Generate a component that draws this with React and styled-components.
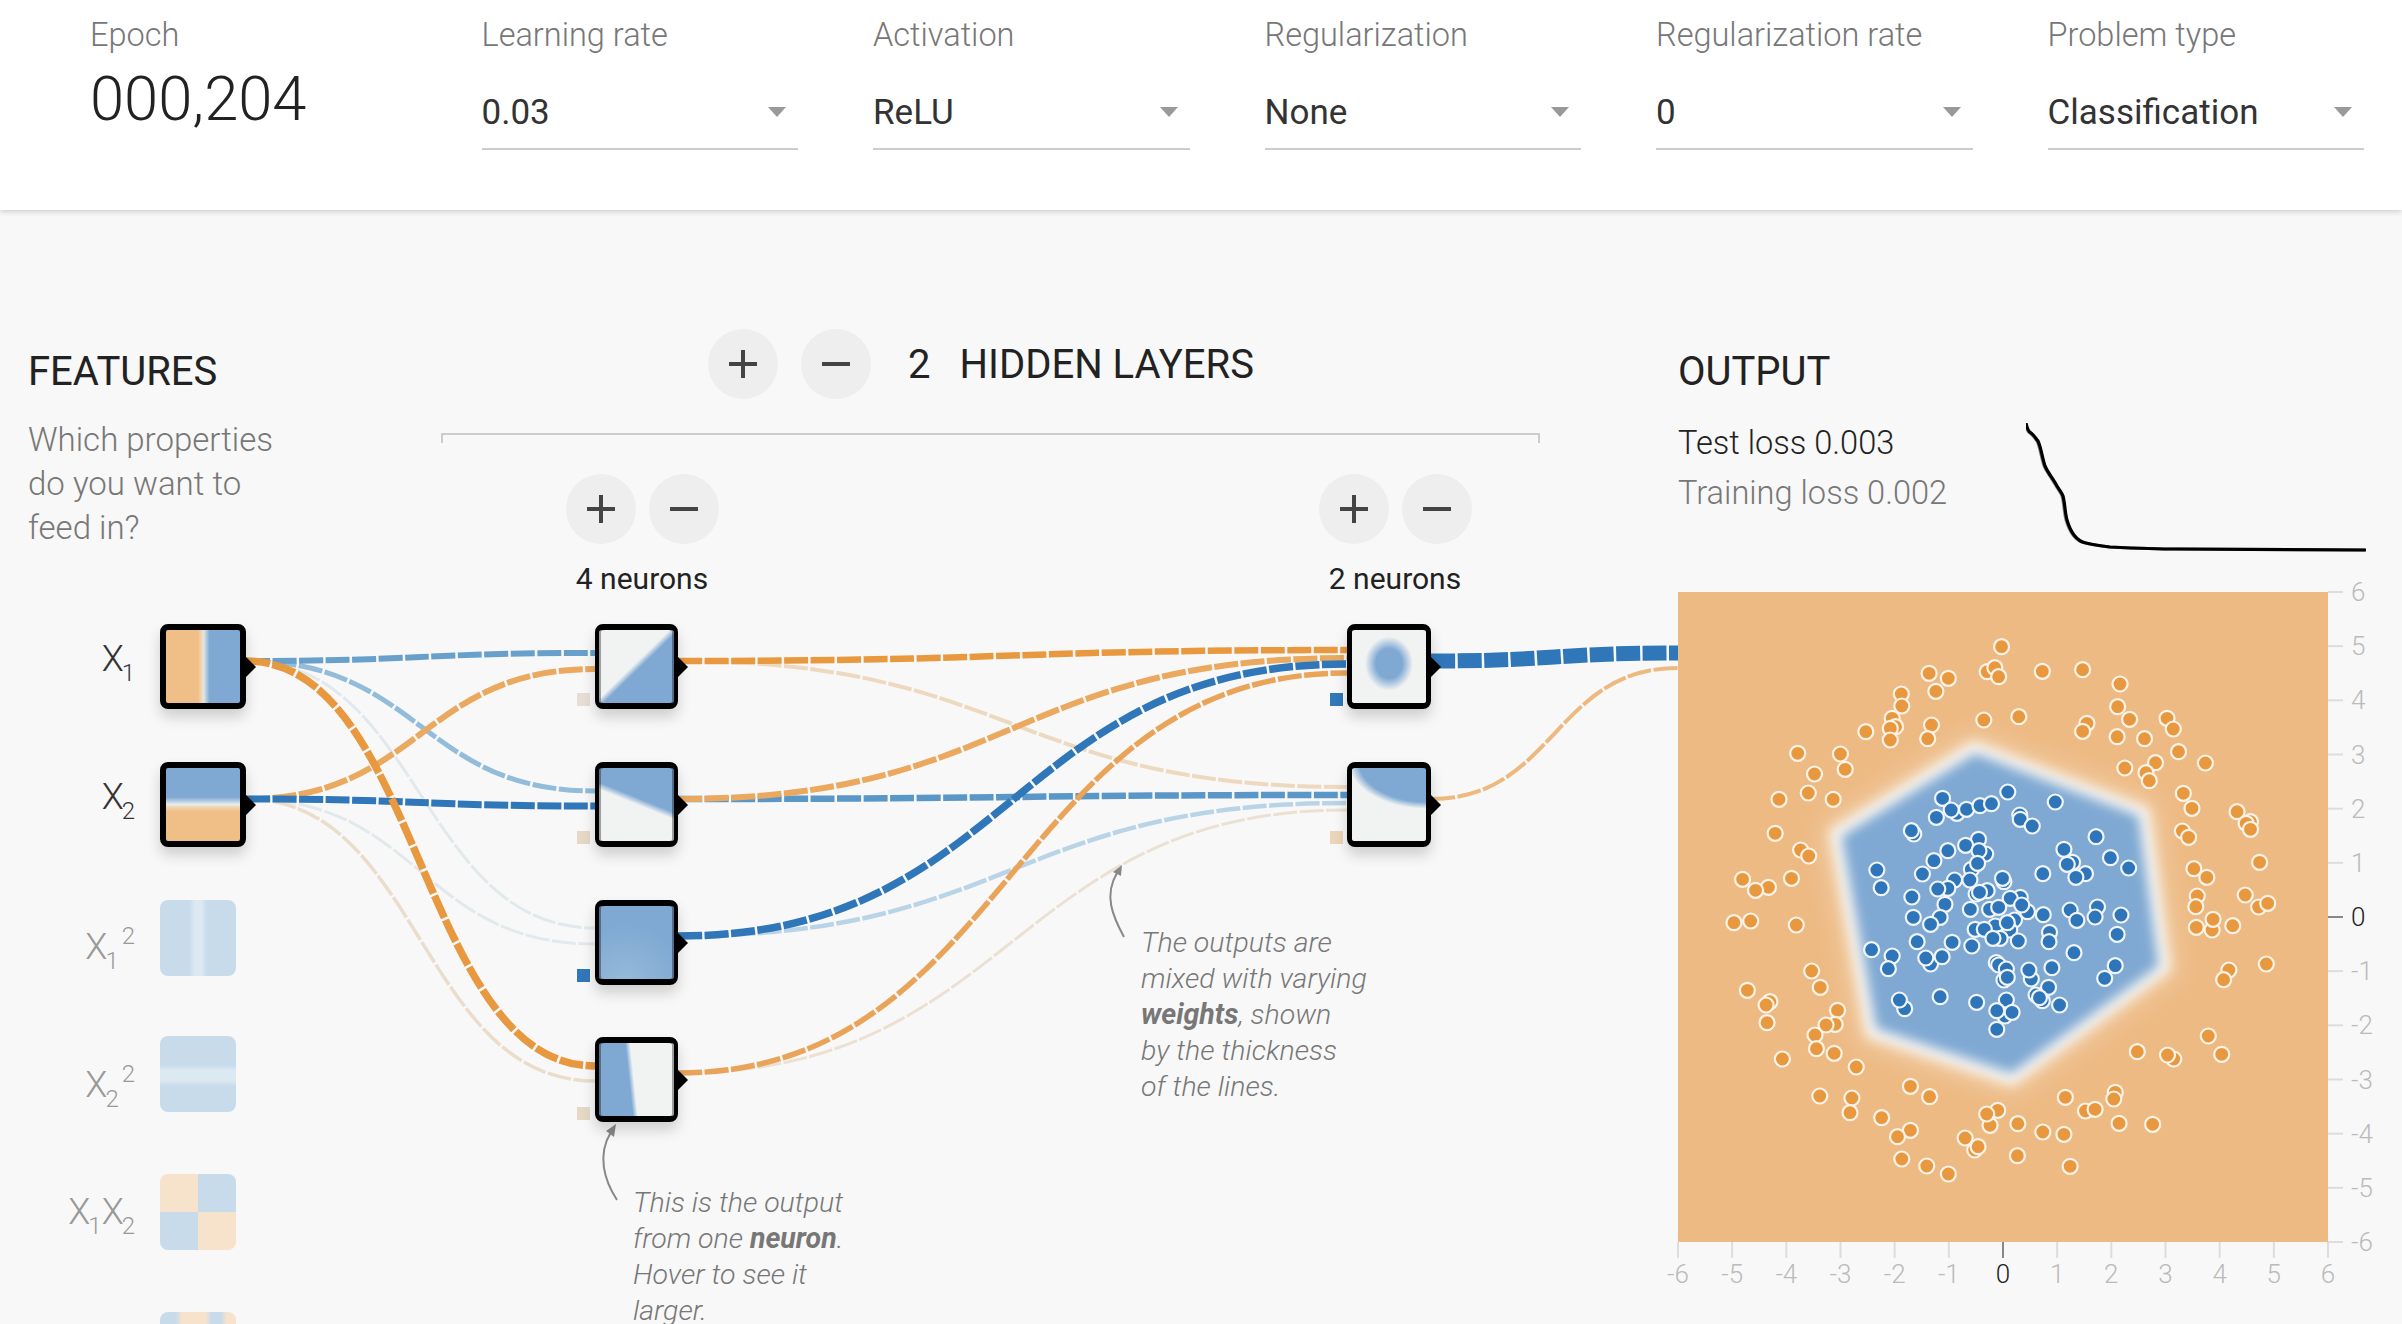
import React from 'react'
import styled, { createGlobalStyle } from 'styled-components'
import { MdAdd, MdRemove } from 'react-icons/md'

const GlobalStyle = createGlobalStyle`
  html, body {
    margin: 0;
    height: 100%;
    overflow: hidden;
    background: #f8f8f8;
    font-family: Roboto, "Liberation Sans", sans-serif;
    font-weight: 300;
  }
`

const BLUE = '#7fa9d3'
const ORANGE = '#f0be87'
const PALE = '#f1f3f3'

const selects = [
  ['Learning rate', '0.03'],
  ['Activation', 'ReLU'],
  ['Regularization', 'None'],
  ['Regularization rate', '0'],
  ['Problem type', 'Classification'],
]

// x, y, thumbnail of the nodes that take part in the network
const activeNodes = [
  { x: 160, y: 624, w: 86, side: 6, bg: `linear-gradient(to right, ${ORANGE} 43%, #f2d6b0 48%, #dfe6e8 51%, ${BLUE} 59%)` },
  { x: 160, y: 762, w: 86, side: 6, bg: `linear-gradient(to bottom, ${BLUE} 40%, #e6ecee 50%, #f2d3ac 54%, ${ORANGE} 60%)` },
  { x: 595, y: 624, w: 83, side: 4, strip: true, bg: `linear-gradient(to bottom right, ${PALE} 47%, ${BLUE} 53%)` },
  { x: 595, y: 762, w: 83, side: 4, strip: true, bg: `linear-gradient(202deg, ${BLUE} 43%, ${PALE} 50%)` },
  { x: 595, y: 900, w: 83, side: 4, strip: true, bg: `radial-gradient(circle at 35% 105%, #96bbd9, ${BLUE} 65%)` },
  { x: 595, y: 1037, w: 83, side: 4, strip: true, bg: `linear-gradient(84deg, ${BLUE} 41%, ${PALE} 47%)` },
  { x: 1347, y: 624, w: 84, side: 5, bg: `radial-gradient(ellipse 24px 27px at 50% 46%, ${BLUE} 55%, ${PALE} 100%)` },
  { x: 1347, y: 762, w: 84, side: 5, bg: `radial-gradient(ellipse 78px 48px at 100% -10%, ${BLUE} 86%, ${PALE} 100%)` },
]

const LT = '#c8dbeb'
const LW = '#dde9f2'
const LO = '#f7e3cc'

const dimNodes = [
  { y: 900, bg: `linear-gradient(to right, ${LT} 38%, ${LW} 46%, ${LW} 54%, ${LT} 62%)` },
  { y: 1036, bg: `linear-gradient(to bottom, ${LT} 38%, ${LW} 46%, ${LW} 58%, ${LT} 66%)` },
  { y: 1174, bg: `conic-gradient(${LT} 0 25%, ${LO} 25% 50%, ${LT} 50% 75%, ${LO} 75%)` },
  { y: 1312, bg: `linear-gradient(to right, ${LT} 20%, ${LO} 30% 60%, ${LT} 68% 80%, ${LO} 88%)` },
]

const biases = [
  { x: 577, y: 693, c: '#e6ded4' },
  { x: 577, y: 831, c: '#e6d8c6' },
  { x: 577, y: 969, c: '#3177b9' },
  { x: 577, y: 1107, c: '#e6d8c6' },
  { x: 1330, y: 693, c: '#3177b9' },
  { x: 1330, y: 831, c: '#ebd5ba' },
]

// [source x, source y, target x, target y, colour, width]
const links = [
  [246, 661, 595, 928, '#e2e9ec', 3],
  [246, 799, 595, 944, '#e2e9ec', 3],
  [246, 799, 595, 1081, '#eaddcb', 3.5],
  [246, 661, 595, 791, '#93bcda', 5],
  [246, 661, 595, 653, '#68a0cb', 6],
  [246, 799, 595, 669, '#eaa95f', 6],
  [246, 799, 595, 806, '#3077b9', 7],
  [246, 661, 595, 1066, '#e8983f', 7.5],
  [678, 1073, 1347, 810, '#ebe1d2', 3],
  [678, 661, 1347, 787, '#edd9bf', 4],
  [678, 936, 1347, 803, '#b9d4e6', 4.5],
  [678, 799, 1347, 795, '#5a97c7', 6.5],
  [678, 661, 1347, 650, '#e8993f', 6.5],
  [678, 799, 1347, 658, '#eaa95f', 6],
  [678, 936, 1347, 664, '#3077b9', 7.5],
  [678, 1073, 1347, 673, '#eaa45a', 5.5],
  [1431, 799, 1678, 668, '#edb97f', 4],
  [1431, 661, 1678, 653, '#3077b9', 15],
]

const linkPath = ([x1, y1, x2, y2]) => {
  const m = (x1 + x2) / 2
  return `M${x1} ${y1}C${m} ${y1},${m} ${y2},${x2} ${y2}`
}

const orangeDots = [
  [733,-520],[582,-440],[622,-425],[703,-445],[719,-457],[727,-430],[818,-446],[902,-451],[980,-408],[524,-378],[525,-342],[596,-386],[975,-340],[505,-305],[512,-280],[501,-275],[501,-240],[450,-265],[587,-285],[579,-244],[696,-300],[769,-310],[911,-290],[902,-266],[1000,-302],[974,-250],[1031,-244],[1078,-305],[1091,-273],[1102,-205],[1158,-171],[1054,-172],[1034,-142],[1041,-118],[990,-156],[1112,-80],[1130,-35],[308,-200],[397,-198],[407,-152],[343,-138],[330,-81],[382,-62],[269,-62],[1224,-25],[1252,5],[1243,10],[1252,28],
  [261,40],[1110,33],[1123,52],[314,90],[331,108],[193,178],[295,175],[247,202],[220,211],[1134,146],[1161,172],[1271,127],[1141,228],[1138,260],[1241,225],[1269,261],[1288,250],[175,308],[210,303],[305,315],[1139,322],[1172,330],[1174,298],[1215,317],[1285,432],[1207,450],[1196,479],[337,453],[355,502],[203,511],[250,545],[242,555],[244,608],[391,571],[386,613],[367,615],[344,645],[347,686],[384,700],[276,717],[430,741],[1164,648],[1192,703],[1016,695],[1092,717],[1079,705],[354,828],[421,834],[417,878],[543,799],[583,830],[483,893],[543,931],[516,950],[525,1017],[577,1038],[622,1062],[657,954],[677,990],[684,980],[725,871],[709,916],[702,882],[767,911],[819,936],[863,943],[866,832],[908,873],[928,868],[970,817],[967,837],[978,910],[1048,913],[766,1007],[876,1039],
]

const blueDots = [
  [640,-20],[610,-65],[628,-30],[660,-32],[688,-43],[712,-49],[746,-84],[845,-54],[597,-8],[771,-15],[772,-2],[550,42],[545,32],[797,18],
  [930,50],[685,58],[658,76],[700,102],[686,92],[863,88],[621,92],[592,122],[670,148],[683,130],[960,113],[881,127],[870,133],[998,144],[473,150],[568,162],[819,161],[908,161],[888,172],[635,180],[667,180],[738,185],[735,175],[482,203],[621,205],[600,207],[703,212],[680,222],[687,217],[546,231],[772,232],[751,235],[615,253],[933,261],[668,268],[708,268],[787,275],[727,262],[775,255],[876,270],[982,285],[549,292],[605,292],[820,284],[928,291],[890,301],[585,313],[760,300],[750,330],[720,318],[745,308],[678,328],[697,328],[833,337],[974,343],[557,365],[630,367],[671,378],[730,355],[715,355],[768,363],[832,365],[462,389],[505,408],[585,432],[575,414],[609,410],[884,398],[722,428],[727,435],[743,447],[497,446],[838,443],[970,437],[795,477],[790,450],[738,480],[745,472],[948,475],[831,502],[531,566],[520,540],[605,530],[818,542],[805,525],[812,533],[681,547],[743,540],[854,555],[740,588],[723,572],[755,577],[723,628],
]

const plotX = (z) => z / 2.085 - 28
const plotY = (z) => 228 + z / 3

const hull = '296,155 466,220 487,376 334,488 193,441 157,241'
const SIZE = 650
const ticks = [-6, -5, -4, -3, -2, -1, 0, 1, 2, 3, 4, 5, 6]
const lossCurve = 'M0 0C1 5,3 9,5 10C9 13,10 16,12 18C15 24,16 34,19 43C22 50,28 57,31 63C34 68,36 70,37 73C39 81,39 90,41 97C43 104,45 108,48 112C51 116,55 119,60 120C68 122,76 123,84 124C106 125,128 126,151 126L340 127'

const Page = styled.div`
  position: relative;
  width: 2402px;
  height: 1324px;
  overflow: hidden;
`
const Header = styled.header`
  position: relative;
  z-index: 2;
  height: 210px;
  box-sizing: border-box;
  background: #fff;
  box-shadow: 0 2px 5px rgba(0, 0, 0, 0.16);
  padding-left: 90px;
  display: grid;
  grid-template-columns: repeat(6, 316.5px);
  column-gap: 75px;
`
const Control = styled.div`
  display: flex;
  flex-direction: column;
  padding-top: 16px;
`
const ControlLabel = styled.label`
  font-size: 32.5px;
  line-height: 38px;
  color: #777;
`
const EpochValue = styled.div`
  font-size: 61.5px;
  line-height: 70px;
  margin-top: 10px;
  color: #222;
`
const SelectBox = styled.div`
  position: relative;
  height: 74px;
  margin-top: 22px;
  box-sizing: border-box;
  padding-top: 17px;
  border-bottom: 2px solid #ccc;
  font-size: 35px;
  line-height: 40px;
  font-weight: 400;
  color: #333;

  &::after {
    content: '';
    position: absolute;
    right: 12px;
    top: 31px;
    border-left: 9.5px solid transparent;
    border-right: 9.5px solid transparent;
    border-top: 10px solid #999;
  }
`
const Main = styled.main`
  display: grid;
  grid-template-columns: 413px 1237px 1fr;
  padding-left: 28px;
`
const Column = styled.section`
  padding-top: 141px;
`
const Heading = styled.h4`
  margin: 0 0 25px;
  font-size: 40px;
  line-height: 42px;
  font-weight: 400;
  color: #222;
`
const Question = styled.p`
  margin: 0;
  width: 280px;
  font-size: 33px;
  line-height: 44px;
  color: #777;
`
const HiddenColumn = styled.section`
  padding-top: 119px;
`
const HiddenRow = styled.div`
  display: flex;
  align-items: center;
  padding-left: 267px;
  gap: 23px;
`
const RoundButton = styled.button`
  width: 70px;
  height: 70px;
  padding: 0;
  border: 0;
  border-radius: 50%;
  background: #eee;
  color: #444;
  display: flex;
  align-items: center;
  justify-content: center;
`
const HiddenTitle = styled.div`
  margin: 2px 0 0 14px;
  display: flex;
  gap: 29px;
  font-size: 40px;
  line-height: 46px;
  font-weight: 400;
  color: #222;
`
const Bracket = styled.div`
  width: 1099px;
  height: 10px;
  box-sizing: border-box;
  margin-top: 34px;
  border: 2px solid #ccc;
  border-bottom: 0;
`
const LayerRow = styled.div`
  display: flex;
  gap: 513px;
  padding: 31px 0 0 81px;
`
const LayerGroup = styled.div`
  width: 240px;
  display: flex;
  flex-direction: column;
  align-items: center;
`
const LayerButtons = styled.div`
  display: flex;
  gap: 13px;
`
const NeuronCount = styled.div`
  margin-top: 17px;
  font-size: 30px;
  line-height: 36px;
  font-weight: 400;
  color: #222;
`
const LossRow = styled.div`
  display: flex;
  height: 174px;
`
const Metrics = styled.div`
  width: 348px;
`
const Metric = styled.div`
  font-size: 32.6px;
  line-height: 50px;
  color: ${(p) => (p.$dim ? '#777' : '#222')};
`
const LossChart = styled.svg`
  margin-top: 5px;
  display: block;
`
const HeatmapSvg = styled.svg`
  display: block;
  overflow: visible;
  font-family: Roboto, "Liberation Sans", sans-serif;
  font-weight: 300;
`

// network diagram: nodes are placed on a free canvas
const Network = styled.div`
  position: absolute;
  inset: 0;
  pointer-events: none;
`
const Links = styled.svg`
  position: absolute;
  left: 0;
  top: 0;
`
const Node = styled.div`
  position: absolute;
  left: ${(p) => p.$x}px;
  top: ${(p) => p.$y}px;
  width: ${(p) => p.$w}px;
  height: 85px;
  box-sizing: border-box;
  border-style: solid;
  border-color: #000;
  border-width: 6px ${(p) => p.$side}px;
  border-radius: 8px;
  background: ${(p) => p.$bg};
  box-shadow: 0 8px 14px rgba(0, 0, 0, 0.17)${(p) => (p.$strip ? ', inset 2px 0 rgba(0, 0, 0, 0.35), inset -2px 0 rgba(0, 0, 0, 0.35)' : '')};

  &::after {
    content: '';
    position: absolute;
    left: 100%;
    margin-left: ${(p) => p.$side}px;
    top: 27px;
    border-left: 10px solid #000;
    border-top: 10px solid transparent;
    border-bottom: 10px solid transparent;
  }
`
const DimNode = styled.div`
  position: absolute;
  left: 160px;
  top: ${(p) => p.$y}px;
  width: 76px;
  height: 76px;
  border-radius: 8px;
  background: ${(p) => p.$bg};
`
const Bias = styled.div`
  position: absolute;
  left: ${(p) => p.$x}px;
  top: ${(p) => p.$y}px;
  width: 13px;
  height: 13px;
  background: ${(p) => p.$c};
`
const FeatureLabel = styled.div`
  position: absolute;
  right: ${2402 - 135}px;
  top: ${(p) => p.$y}px;
  font-size: 36px;
  line-height: 40px;
  letter-spacing: -2px;
  white-space: nowrap;
  color: ${(p) => (p.$dim ? '#999' : '#333')};
`
const Sub = styled.span`
  font-size: 24px;
  letter-spacing: 0;
  vertical-align: -10px;
`
const Sup = styled.span`
  font-size: 24px;
  letter-spacing: 0;
  vertical-align: 15px;
  margin-left: 3px;
`
const Note = styled.div`
  position: absolute;
  left: ${(p) => p.$x}px;
  top: ${(p) => p.$y}px;
  width: 300px;
  font-size: 28.5px;
  line-height: 36px;
  font-style: italic;
  color: #777;

  b {
    font-weight: 700;
  }
`

const Plus = () => (
  <RoundButton><MdAdd size={48} /></RoundButton>
)
const Minus = () => (
  <RoundButton><MdRemove size={48} /></RoundButton>
)

const Heatmap = () => (
  <HeatmapSvg width="724" height="700" viewBox="0 0 724 700">
    <defs>
      <filter id="wide" x="-20%" y="-20%" width="140%" height="140%">
        <feGaussianBlur stdDeviation="11" />
      </filter>
      <filter id="soft" x="-10%" y="-10%" width="120%" height="120%">
        <feGaussianBlur stdDeviation="6" />
      </filter>
      <clipPath id="plot">
        <rect width={SIZE} height={SIZE} />
      </clipPath>
    </defs>
    <rect width={SIZE} height={SIZE} fill="#edba84" />
    <g clipPath="url(#plot)">
      <polygon points={hull} fill="#f1cfa8" stroke="#f1cfa8" strokeWidth="26" strokeLinejoin="round" filter="url(#wide)" />
      <polygon points={hull} fill="#f7f5f2" stroke="#f7f5f2" strokeWidth="10" strokeLinejoin="round" filter="url(#soft)" />
      <polygon points={hull} fill={BLUE} filter="url(#soft)" transform="translate(325 320) scale(.96) translate(-325 -320)" />
      {orangeDots.map(([x, y], i) => (
        <circle key={i} cx={plotX(x)} cy={plotY(y)} r="7.5" fill="#e8993f" stroke="#fbf3e8" strokeWidth="2.2" />
      ))}
      {blueDots.map(([x, y], i) => (
        <circle key={i} cx={plotX(x)} cy={plotY(y)} r="7.5" fill="#2e75b9" stroke="#f1f5f8" strokeWidth="2.2" />
      ))}
    </g>
    {ticks.map((t) => {
      const pos = ((t + 6) / 12) * SIZE
      const zero = t === 0
      return (
        <g key={t}>
          <line x1={SIZE} x2={SIZE + 15} y1={SIZE - pos} y2={SIZE - pos} stroke={zero ? '#888' : '#ddd'} strokeWidth="2" />
          <text x={SIZE + 23} y={SIZE - pos + 9} fontSize="26" fill={zero ? '#222' : '#bbb'}>{t}</text>
          <line x1={pos} x2={pos} y1={SIZE} y2={SIZE + 16} stroke={zero ? '#888' : '#ddd'} strokeWidth="2" />
          <text x={pos} y={SIZE + 41} fontSize="26" textAnchor="middle" fill={zero ? '#222' : '#bbb'}>{t}</text>
        </g>
      )
    })}
  </HeatmapSvg>
)

export default function App() {
  return (
    <Page>
      <GlobalStyle />
      <Header>
        <Control>
          <ControlLabel>Epoch</ControlLabel>
          <EpochValue>000,204</EpochValue>
        </Control>
        {selects.map(([label, value]) => (
          <Control key={label}>
            <ControlLabel>{label}</ControlLabel>
            <SelectBox>{value}</SelectBox>
          </Control>
        ))}
      </Header>

      <Network>
        <Links width="2402" height="1324" viewBox="0 0 2402 1324" fill="none">
          {links.map((l, i) => (
            <path key={i} d={linkPath(l)} stroke={l[4]} strokeWidth={l[5]} strokeDasharray="24 2.5" />
          ))}
          <path d="M617 1200C604 1180,597 1155,611 1132" stroke="#888" strokeWidth="2" />
          <polygon points="616,1124 606,1131 614,1137" fill="#888" />
          <path d="M1124 937C1112 915,1104 895,1117 873" stroke="#888" strokeWidth="2" />
          <polygon points="1122,865 1113,872 1121,876" fill="#888" />
        </Links>
        {biases.map((b) => (
          <Bias key={`${b.x}-${b.y}`} $x={b.x} $y={b.y} $c={b.c} />
        ))}
        {activeNodes.map((n) => (
          <Node key={`${n.x}-${n.y}`} $x={n.x} $y={n.y} $w={n.w} $side={n.side} $strip={n.strip} $bg={n.bg} />
        ))}
        {dimNodes.map((n) => (
          <DimNode key={n.y} $y={n.y} $bg={n.bg} />
        ))}

        <FeatureLabel $y={639}>X<Sub>1</Sub></FeatureLabel>
        <FeatureLabel $y={777}>X<Sub>2</Sub></FeatureLabel>
        <FeatureLabel $y={916} $dim>X<Sub>1</Sub><Sup>2</Sup></FeatureLabel>
        <FeatureLabel $y={1054} $dim>X<Sub>2</Sub><Sup>2</Sup></FeatureLabel>
        <FeatureLabel $y={1192} $dim>X<Sub>1</Sub>X<Sub>2</Sub></FeatureLabel>

        <Note $x={633} $y={1185}>
          This is the output<br />from one <b>neuron</b>.<br />Hover to see it<br />larger.
        </Note>
        <Note $x={1141} $y={925}>
          The outputs are<br />mixed with varying<br /><b>weights</b>, shown<br />by the thickness<br />of the lines.
        </Note>
      </Network>

      <Main>
        <Column>
          <Heading>FEATURES</Heading>
          <Question>Which properties do you want to feed in?</Question>
        </Column>
        <HiddenColumn>
          <HiddenRow>
            <Plus />
            <Minus />
            <HiddenTitle>
              <span>2</span>
              <span>HIDDEN LAYERS</span>
            </HiddenTitle>
          </HiddenRow>
          <Bracket />
          <LayerRow>
            <LayerGroup>
              <LayerButtons><Plus /><Minus /></LayerButtons>
              <NeuronCount>4 neurons</NeuronCount>
            </LayerGroup>
            <LayerGroup>
              <LayerButtons><Plus /><Minus /></LayerButtons>
              <NeuronCount>2 neurons</NeuronCount>
            </LayerGroup>
          </LayerRow>
        </HiddenColumn>
        <Column>
          <Heading>OUTPUT</Heading>
          <LossRow>
            <Metrics>
              <Metric>Test loss 0.003</Metric>
              <Metric $dim>Training loss 0.002</Metric>
            </Metrics>
            <LossChart width="342" height="130" viewBox="0 0 342 130" fill="none">
              <path d={lossCurve} stroke="#888" strokeWidth="3" transform="translate(-1 0)" />
              <path d={lossCurve} stroke="#000" strokeWidth="3.2" />
            </LossChart>
          </LossRow>
          <Heatmap />
        </Column>
      </Main>
    </Page>
  )
}
